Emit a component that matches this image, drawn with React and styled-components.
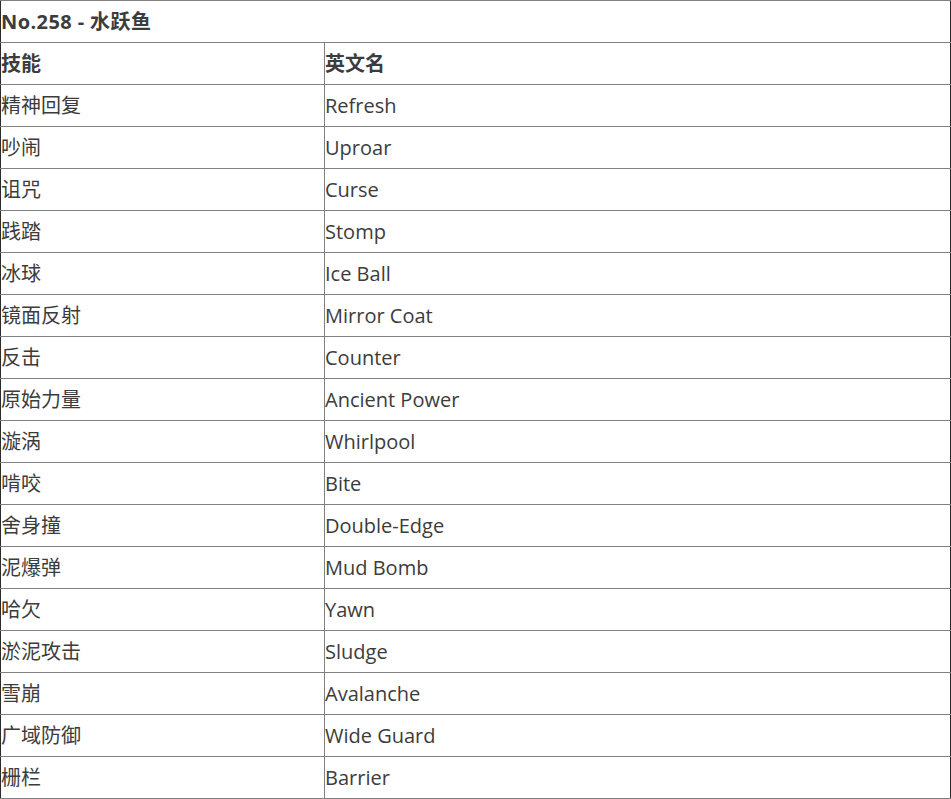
import React from "react";
import styled, { createGlobalStyle } from "styled-components";

const Global = createGlobalStyle`
  html, body { margin: 0; padding: 0; background: #fff; }
  body { font-family: "Open Sans", "Noto Sans CJK SC", sans-serif; }
`;

const Table = styled.table`
  width: 951px;
  border-collapse: collapse;
  table-layout: fixed;
  border-left: 1px solid #2b2b2b;
  border-right: 1px solid #2b2b2b;
  color: #3c3c3c;
  font-size: 20px;
`;

const Cell = styled.td`
  height: 41px;
  padding: 0;
  border-top: 1px solid #808080;
  border-bottom: 1px solid #808080;
  border-right: ${(p) => (p.$split ? "1px solid #808080" : "none")};
  vertical-align: middle;
  white-space: nowrap;
  font-weight: ${(p) => (p.$bold ? 700 : 400)};
  letter-spacing: ${(p) => (p.$title ? "0.4px" : "0")};
  line-height: 41px;
`;

const rows = [
  ["精神回复", "Refresh"],
  ["吵闹", "Uproar"],
  ["诅咒", "Curse"],
  ["践踏", "Stomp"],
  ["冰球", "Ice Ball"],
  ["镜面反射", "Mirror Coat"],
  ["反击", "Counter"],
  ["原始力量", "Ancient Power"],
  ["漩涡", "Whirlpool"],
  ["啃咬", "Bite"],
  ["舍身撞", "Double-Edge"],
  ["泥爆弹", "Mud Bomb"],
  ["哈欠", "Yawn"],
  ["淤泥攻击", "Sludge"],
  ["雪崩", "Avalanche"],
  ["广域防御", "Wide Guard"],
  ["栅栏", "Barrier"],
];

export default function App() {
  return (
    <>
      <Global />
      <Table>
        <colgroup>
          <col style={{ width: 324 }} />
          <col />
        </colgroup>
        <tbody>
          <tr>
            <Cell colSpan={2} $bold $title>No.258 - 水跃鱼</Cell>
          </tr>
          <tr>
            <Cell $split $bold>技能</Cell>
            <Cell $bold>英文名</Cell>
          </tr>
          {rows.map(([cn, en]) => (
            <tr key={en}>
              <Cell $split>{cn}</Cell>
              <Cell>{en}</Cell>
            </tr>
          ))}
        </tbody>
      </Table>
    </>
  );
}
